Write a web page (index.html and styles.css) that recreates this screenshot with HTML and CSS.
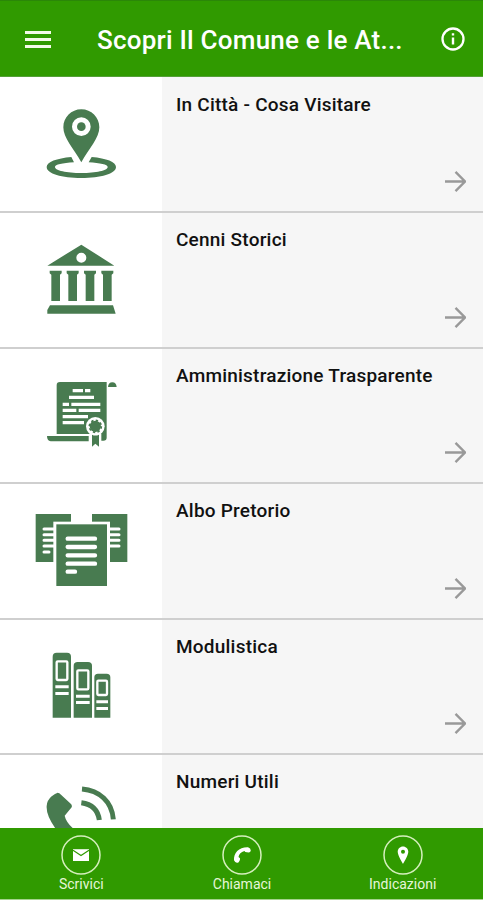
FILE: index.html
```html
<!DOCTYPE html>
<html lang="it">
<head>
    <meta charset="UTF-8">
    <meta name="viewport" content="width=device-width, initial-scale=1.0">
    <title>Scopri Il Comune</title>
    <link rel="stylesheet" href="styles.css">
</head>
<body>
    <div class="app">
        <header class="header">
            <button class="menu-button">
                <span></span>
                <span></span>
                <span></span>
            </button>
            <h1 class="title">Scopri Il Comune e le At...</h1>
            <svg class="info" viewBox="0 0 24 24">
                <circle cx="12" cy="12" r="10.5" fill="none" stroke="currentColor" stroke-width="2.3"/>
                <path d="M10.8 6.3h2.4v2.3h-2.4zM10.8 10.4h2.4v7h-2.4z" fill="currentColor"/>
            </svg>
        </header>

        <main class="list">
            <a class="row">
                <div class="thumb">
                    <svg class="icon" viewBox="0 0 300 285">
                        <path d="M124 186C80 190 50 201 50 216C50 236 96 249 154 249S258 236 258 216C258 201 230 190 185 186L176 202C211 204 233 209 233 216C233 227 198 234 154 234S75 227 75 216C75 209 97 204 132 202Z"/>
                        <path fill-rule="evenodd" d="M154 43C124 43 100 67 100 97C100 129 130 159 154 202C178 159 208 129 208 97C208 67 184 43 154 43ZM154 67A28 28 0 1 1 154 123A28 28 0 1 1 154 67Z"/>
                        <circle cx="154" cy="95" r="13"/>
                    </svg>
                </div>
                <div class="info-cell">
                    <h3>In Città - Cosa Visitare</h3>
                    <svg class="arrow" viewBox="0 0 22 22"><path d="M0 11H20M11 1L21 11L11 21"/></svg>
                </div>
            </a>

            <a class="row">
                <div class="thumb">
                    <svg class="icon" viewBox="0 0 300 285">
                        <path fill-rule="evenodd" d="M154 44L253 107H52ZM154 68A15 15 0 1 0 154 98A15 15 0 1 0 154 68Z"/>
                        <path d="M59 122H95V130L90 134V213H64V134L59 130ZM110 122H146V130L141 134V213H115V134L110 130ZM162 122H198V130L193 134V213H167V134L162 130ZM214 122H250V130L245 134V213H219V134L214 130Z"/>
                        <path d="M60 226H249L257 251H52V240Z"/>
                    </svg>
                </div>
                <div class="info-cell">
                    <h3>Cenni Storici</h3>
                    <svg class="arrow" viewBox="0 0 22 22"><path d="M0 11H20M11 1L21 11L11 21"/></svg>
                </div>
            </a>

            <a class="row">
                <div class="thumb">
                    <svg class="icon" viewBox="0 3 300 285">
                        <path d="M90 51H230V218Q230 227 220 227H214V207H80V61Q80 51 90 51Z"/>
                        <path d="M234 66Q235 52 247 52T260 66Z"/>
                        <path d="M51 213H176V229H62Q51 228 51 213Z"/>
                        <path class="paper" d="M128 72h31v10h-31zM165 72h16v10h-16zM117 92h75v10h-75zM98 113h19v10h-19zM124 113h87v10h-87zM98 131h41v10h-41zM146 131h65v10h-65zM98 150h76v10h-76zM98 168h64v10h-64z"/>
                        <path class="paper" d="M179 202H213V248H179Z"/>
                        <circle class="paper" cx="196" cy="184" r="28"/>
                        <circle cx="196" cy="184" r="17"/>
                        <circle cx="196" cy="184" r="18" fill="none" stroke="#487b50" stroke-width="5" stroke-dasharray="7 7"/>
                        <path d="M186 209Q196 214 207 209V245L196 236L186 245Z"/>
                    </svg>
                </div>
                <div class="info-cell">
                    <h3>Amministrazione Trasparente</h3>
                    <svg class="arrow" viewBox="0 0 22 22"><path d="M0 11H20M11 1L21 11L11 21"/></svg>
                </div>
            </a>

            <a class="row">
                <div class="thumb">
                    <svg class="icon" viewBox="0 3 300 285">
                        <path d="M17 42H123V186H17ZM186 42H292V186H186Z"/>
                        <path class="paper-line" stroke-width="9" d="M42 87H76M42 104H76M42 121H76M42 138H76M42 156H57M235 87H267M235 104H267M235 121H267M235 138H267"/>
                        <rect class="paper" x="70" y="65" width="170" height="200"/>
                        <rect x="79" y="73" width="152" height="185"/>
                        <path class="paper-line" stroke-width="13" d="M113 116H195M113 141H195M113 166H195M113 191H195M113 215H135"/>
                    </svg>
                </div>
                <div class="info-cell">
                    <h3>Albo Pretorio</h3>
                    <svg class="arrow" viewBox="0 0 22 22"><path d="M0 11H20M11 1L21 11L11 21"/></svg>
                </div>
            </a>

            <a class="row">
                <div class="thumb">
                    <svg class="icon" viewBox="0 -9 300 285">
                        <path d="M68 233V50Q68 38 80 38H111Q123 38 123 50V233ZM131 233V77Q131 66 143 66H174Q186 66 186 77V233ZM193 233V112Q193 101 204 101H230Q241 101 241 112V233Z"/>
                        <path class="paper" d="M76 136h40v9h-40zM76 156h40v9h-40zM138 164h41v9h-41zM138 183h41v9h-41zM199 181h35v9h-35zM199 201h35v9h-35z"/>
                        <rect class="frame" x="80" y="64" width="32" height="56" rx="3"/>
                        <rect class="frame" x="142" y="91" width="33" height="57" rx="3"/>
                        <rect class="frame" x="202" y="122" width="29" height="43" rx="3"/>
                    </svg>
                </div>
                <div class="info-cell">
                    <h3>Modulistica</h3>
                    <svg class="arrow" viewBox="0 0 22 22"><path d="M0 11H20M11 1L21 11L11 21"/></svg>
                </div>
            </a>

            <a class="row">
                <div class="thumb">
                    <svg class="icon" viewBox="0 81 300 285">
                        <path d="M83 143Q88 143 93 149L123 177Q127 182 125 187L104 212Q108 231 129 250Q152 279 172 289L194 268Q201 264 206 270L235 299Q239 306 234 311Q214 330 193 328Q120 312 76 250Q48 210 50 183Q51 166 65 154Q76 145 83 143Z"/>
                        <path fill="none" stroke="#487b50" stroke-width="15" d="M156 132C208 136 246 170 250 223M154 173C185 177 204 195 208 225"/>
                    </svg>
                </div>
                <div class="info-cell">
                    <h3>Numeri Utili</h3>
                </div>
            </a>
        </main>

        <footer class="footer">
            <a class="tab">
                <svg viewBox="0 0 40 40">
                    <circle class="ring" cx="20" cy="20" r="19"/>
                    <path d="M12 14.2H28V26H12Z"/>
                    <path d="M12 15.3L20 20.5L28 15.3" fill="none" stroke="#309a00" stroke-width="1.2"/>
                </svg>
                <span>Scrivici</span>
            </a>
            <a class="tab">
                <svg viewBox="0 0 40 40">
                    <circle class="ring" cx="20" cy="20" r="19"/>
                    <path d="M12 25.3C11.5 18 17 12 26 12.3Q28.8 13 28.8 15.5Q28.5 17.3 26.7 17.5L23.3 17.1L22.4 16C19 17 17 19.2 16.5 22L18 23.3Q18.5 25.8 16.7 27.2Q13.5 28.8 12 25.3Z"/>
                </svg>
                <span>Chiamaci</span>
            </a>
            <a class="tab">
                <svg viewBox="0 0 40 40">
                    <circle class="ring" cx="20" cy="20" r="19"/>
                    <path fill-rule="evenodd" d="M20 11.5C17 11.5 14.7 13.8 14.7 16.8C14.7 20.6 20 29 20 29S25.3 20.6 25.3 16.8C25.3 13.8 23 11.5 20 11.5ZM20 14.8A2 2 0 1 1 20 18.8A2 2 0 1 1 20 14.8Z"/>
                </svg>
                <span>Indicazioni</span>
            </a>
        </footer>
    </div>
</body>
</html>
```

FILE: styles.css
```css
* {
    box-sizing: border-box;
}
body {
    margin: 0;
    font-family: Roboto, "Liberation Sans", sans-serif;
    background-color: #fff;
}
.app {
    display: flex;
    flex-direction: column;
    height: 900px;
    overflow: hidden;
}
.header {
    display: flex;
    align-items: center;
    flex: none;
    height: 77px;
    padding: 1px 18px 0 25px;
    color: #fff;
    background-color: #309a00;
    border-top: 1px solid #2b8708;
    border-bottom: 1px solid #54a038;
}
.menu-button {
    display: flex;
    flex-direction: column;
    gap: 4px;
    width: 26px;
    padding: 0;
    border: 0;
    background: none;
}
.menu-button span {
    height: 3px;
    background-color: #f4fbe9;
}
.title {
    flex: 1;
    margin: 2px 0 0 46px;
    font-size: 26px;
    font-weight: 500;
    line-height: 32px;
    letter-spacing: 0.22px;
    white-space: nowrap;
}
.info {
    width: 24px;
    height: 24px;
}
.list {
    flex: 1;
    min-height: 0;
    padding-top: 1px;
    overflow: hidden;
    background: linear-gradient(to right, #fff 162px, #f6f6f6 162px);
}
.row {
    display: flex;
    height: 135.4px;
    border-bottom: 2px solid #cfcfcf;
}
.thumb {
    width: 162px;
    padding: 17px 0 0 30px;
    background-color: #fff;
}
.icon {
    display: block;
    width: 100px;
    height: 95px;
    fill: #487b50;
}
.paper {
    fill: #fff;
}
.paper-line {
    stroke: #fff;
    stroke-linecap: round;
}
.frame {
    stroke: #fff;
    stroke-width: 7;
}
.info-cell {
    display: flex;
    flex: 1;
    flex-direction: column;
    justify-content: space-between;
    padding: 15px 17px 19px 14px;
    background-color: #f6f6f6;
}
.info-cell h3 {
    margin: 0;
    font-size: 19px;
    font-weight: 500;
    line-height: 24px;
    letter-spacing: 0.22px;
    color: #111;
}
.arrow {
    align-self: flex-end;
    width: 21px;
    height: 21px;
    fill: none;
    stroke: #999;
    stroke-width: 2.5;
}
.footer {
    display: flex;
    flex: none;
    height: 72px;
    padding-left: 1px;
    background-color: #309a00;
    border-bottom: 1px solid #a5d38e;
}
.tab {
    display: flex;
    flex: 1;
    flex-direction: column;
    align-items: center;
    padding-top: 7px;
    font-size: 14px;
    line-height: 18px;
    color: #e6f6d8;
}
.tab svg {
    width: 40px;
    height: 40px;
    fill: #fff;
}
.tab .ring {
    fill: none;
    stroke: #d5efbd;
    stroke-width: 1.5;
}
```
